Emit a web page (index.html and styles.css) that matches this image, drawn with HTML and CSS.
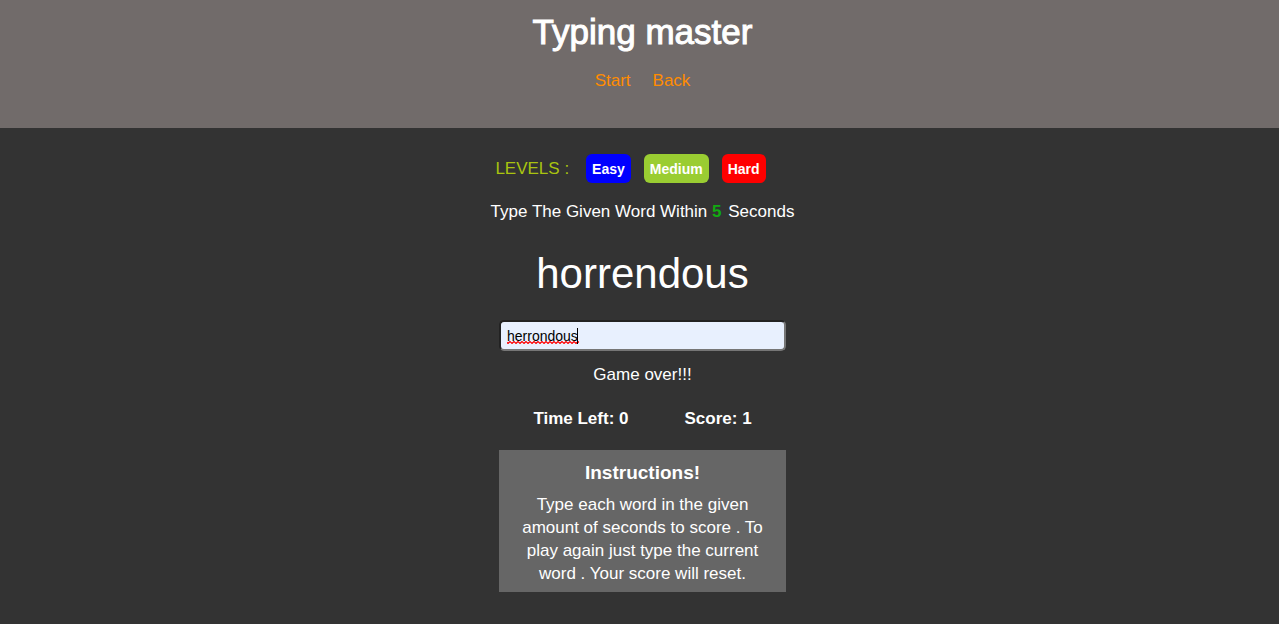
FILE: index.html
```html
<!DOCTYPE html>
<html lang="en">
<head>
<meta charset="utf-8">
<title>Typing master</title>
<link rel="stylesheet" href="styles.css">
</head>
<body>
<header class="header">
  <h1 class="title">Typing master</h1>
  <nav class="nav">
    <a href="#start">Start</a>
    <a href="#back">Back</a>
  </nav>
</header>
<main class="game">
  <div class="levels">
    <span class="levels-label">LEVELS :</span>
    <button type="button" class="level easy">Easy</button>
    <button type="button" class="level medium">Medium</button>
    <button type="button" class="level hard">Hard</button>
  </div>
  <p class="hint">Type The Given Word Within <span class="seconds">5</span> Seconds</p>
  <h2 class="word" id="word">horrendous</h2>
  <div class="field">
    <input class="entry" type="text" value="herrondous" aria-labelledby="word" spellcheck="false">
    <svg class="squiggle" viewBox="0 0 72 3" aria-hidden="true">
      <defs><pattern id="wave" width="4" height="3" patternUnits="userSpaceOnUse"><path d="M-1 0L1 2L3 0L5 2" transform="translate(0 .5)" fill="none" stroke="#f00" stroke-width="1.2"/></pattern></defs>
      <rect width="72" height="3" fill="url(#wave)"/>
    </svg>
    <span class="caret"></span>
  </div>
  <p class="message">Game over!!!</p>
  <div class="stats">
    <h3 class="stat">Time Left: <span>0</span></h3>
    <h3 class="stat">Score: <span>1</span></h3>
  </div>
  <section class="instructions">
    <h4 class="instructions-title">Instructions!</h4>
    <p>Type each word in the given amount of seconds to score . To play again just type the current word . Your score will reset.</p>
  </section>
</main>
</body>
</html>
```
FILE: styles.css
```css
* {
  box-sizing: border-box;
  margin: 0;
}

body {
  min-height: 100vh;
  background: #333;
  color: #fff;
  font: 17px/23px "Liberation Sans", Arial, sans-serif;
  text-align: center;
}

.header {
  padding: 12px 0 36px 6px;
  background: #716b6a;
}

.title {
  font-size: 35px;
  font-weight: 400;
  line-height: 40px;
  -webkit-text-stroke: 1px #fff;
}

.nav {
  display: flex;
  justify-content: center;
  gap: 22px;
  padding-top: 17px;
}

.nav a {
  color: #ff8c00;
  text-decoration: none;
}

.game {
  display: flex;
  flex-direction: column;
  align-items: center;
  padding: 26px 0 32px 6px;
}

.levels {
  display: flex;
  align-items: center;
  gap: 13px;
  margin-right: 24px;
}

.levels-label {
  margin-right: 4px;
  color: #a9c40f;
}

.level {
  height: 29px;
  padding: 0 6px;
  border: 0;
  border-radius: 6px;
  color: #fff;
  font: bold 14px "Liberation Sans", Arial, sans-serif;
}

.easy {
  background: #00f;
}

.medium {
  background: #9acd32;
}

.hard {
  background: #f00;
}

.hint {
  margin-top: 17px;
}

.seconds {
  margin-right: 2px;
  color: #1a1;
  font-weight: 700;
}

.word {
  margin-top: 27px;
  font-size: 42px;
  font-weight: 400;
  line-height: 48px;
}

.field {
  position: relative;
  width: 287px;
  max-width: 100%;
  margin-top: 22px;
}

.entry {
  display: block;
  width: 100%;
  height: 31px;
  padding: 0 6px;
  border: 2px solid;
  border-color: #222 #767676 #767676 #222;
  border-radius: 5px;
  background: #e8f0fe;
  color: #000;
  font: 14px "Liberation Sans", Arial, sans-serif;
}

.squiggle {
  position: absolute;
  top: 21px;
  left: 8px;
  width: 72px;
  height: 3px;
}

.caret {
  position: absolute;
  top: 8px;
  left: 78px;
  width: 1px;
  height: 16px;
  background: #000;
}

.message {
  margin-top: 12px;
}

.stats {
  display: flex;
  gap: 56px;
  margin-top: 21px;
}

.stat {
  font-size: 17px;
  font-weight: 700;
}

.instructions {
  width: 287px;
  max-width: 100%;
  margin-top: 20px;
  padding: 11px 20px 7px;
  background: #666;
}

.instructions-title {
  margin-bottom: 9px;
  font-size: 19px;
  font-weight: 700;
}
```
